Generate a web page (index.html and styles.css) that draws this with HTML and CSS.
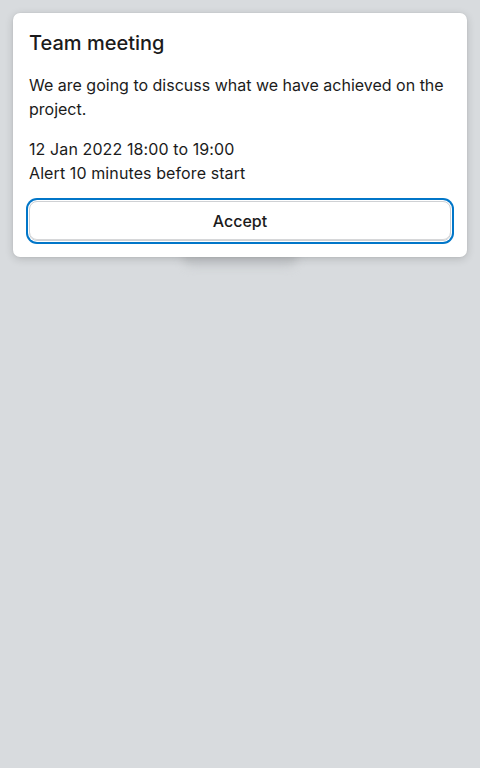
FILE: index.html
```html
<!DOCTYPE html>
<html lang="en">
<head>
<meta charset="utf-8">
<title>Team meeting</title>
<link rel="stylesheet" href="styles.css">
</head>
<body>
<div class="backdrop-blob"></div>
<div class="card" role="dialog" aria-labelledby="t">
  <h1 class="title" id="t">Team meeting</h1>
  <p class="desc">We are going to discuss what we have achieved on the project.</p>
  <div class="meta">
    <div>12 Jan 2022 18:00 to 19:00</div>
    <div>Alert 10 minutes before start</div>
  </div>
  <button class="btn" type="button">Accept</button>
</div>
</body>
</html>
```
FILE: styles.css
```css
html, body {
  margin: 0;
  padding: 0;
  background: #d8dbde;
  height: 100%;
}
body {
  font-family: Inter, "Noto Sans", sans-serif;
  color: #1b1b1b;
  padding: 13px;
  box-sizing: border-box;
  position: relative;
}
.backdrop-blob {
  position: absolute;
  left: 182px;
  top: 246px;
  width: 116px;
  height: 20px;
  background: #c3c6c9;
  border-radius: 10px;
  filter: blur(5px);
}
.card {
  position: relative;
  background: #fff;
  border-radius: 7px;
  padding: 16px;
  box-shadow: 0 2px 8px rgba(0,0,0,0.16), 0 0 2px rgba(0,0,0,0.08);
}
.title {
  margin: 0 0 16px;
  font-size: 20px;
  line-height: 28px;
  font-weight: 500;
}
.desc {
  margin: 0 0 16px;
  font-size: 16px;
  line-height: 24px;
}
.meta {
  font-size: 16px;
  line-height: 24px;
  letter-spacing: 0.1px;
  margin-bottom: 16px;
}
.btn {
  display: block;
  width: 100%;
  height: 40px;
  background: #fff;
  border: 1px solid #cfd1d4;
  border-radius: 8px;
  font-family: inherit;
  font-size: 16px;
  font-weight: 500;
  color: #1b1b1b;
  box-shadow: 0 0 0 1px #fff, 0 0 0 3px #0176c8, inset 0 -1px 0 #d6d7d9;
}
```
